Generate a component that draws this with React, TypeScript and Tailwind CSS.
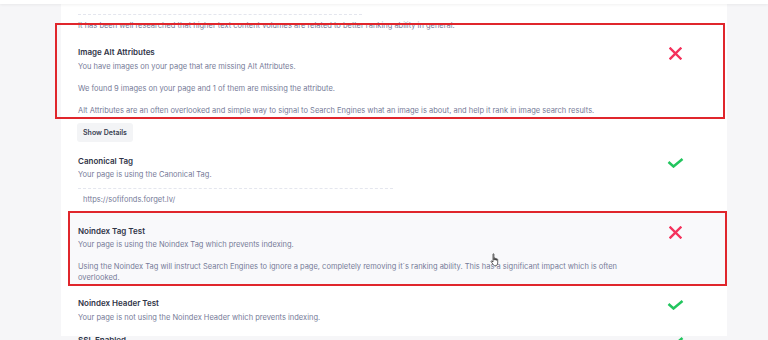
import React from 'react';

const body = 'text-[7.5px] leading-[11px] text-[#767b98]';
const title = 'text-[8px] leading-[14px] font-semibold text-[#2f3447]';

function Cross() {
  return (
    <svg width="13" height="13" viewBox="0 0 13 13" className="mt-[2px]">
      <path d="M1.5 1.5 L11.5 11.5 M11.5 1.5 L1.5 11.5" stroke="#f4325c" strokeWidth="2.4" strokeLinecap="square" />
    </svg>
  );
}

function Check() {
  return (
    <svg width="17" height="10" viewBox="0 0 17 10" className="mt-[4px]">
      <path d="M1.5 4 L6.5 8.5 L15.5 1" stroke="#22c55e" strokeWidth="2.5" fill="none" />
    </svg>
  );
}

function Row({
  children,
  icon,
  className = '',
}: {
  children: React.ReactNode;
  icon: React.ReactNode;
  className?: string;
}) {
  return (
    <div className={`flex justify-between pl-[17px] pr-[43px] ${className}`}>
      <div className="w-[560px]">{children}</div>
      <div className="w-[17px] flex justify-center items-start">{icon}</div>
    </div>
  );
}

export default function App() {
  return (
    <div
      className="relative w-[768px] h-[340px] overflow-hidden bg-[#f6f6f8]"
      style={{ fontFamily: 'Inter, "Noto Sans", sans-serif' }}
    >
      {/* header edge */}
      <div className="absolute top-0 left-0 right-0 h-[4px] bg-white shadow-[0_1px_3px_rgba(0,0,0,0.06)] z-10" />

      <div className="ml-[61px] w-[666px] h-full bg-white">
        <div className="pl-[17px]">
          <p className={`${body} -mt-[4px] ml-[6px] text-[#9a9eb3]`}>Word Count: 380</p>
          <div className="mt-[7px] w-[284px] border-t border-dashed border-[#e4e6ee]" />
          <p className={`${body} mt-[5px]`}>
            It has been well researched that higher text content volumes are related to better ranking ability in general.
          </p>
        </div>

        <Row icon={<Cross />} className="mt-[14px]">
          <p className={title}>Image Alt Attributes</p>
          <p className={`${body} mt-[2px]`}>You have images on your page that are missing Alt Attributes.</p>
          <p className={`${body} mt-[11px]`}>We found 9 images on your page and 1 of them are missing the attribute.</p>
          <p className={`${body} mt-[11px]`}>
            Alt Attributes are an often overlooked and simple way to signal to Search Engines what an image is about, and help it rank in image search results.
          </p>
        </Row>

        <div className="flex pl-[16px] mt-[7px]">
          <button className="block h-[19px] w-[56px] rounded-[3px] bg-[#f3f4f6] text-[7px] leading-[19px] font-semibold text-[#3a3f52]">
            Show Details
          </button>
        </div>

        <Row icon={<Check />} className="mt-[12px]">
          <p className={title}>Canonical Tag</p>
          <p className={`${body} mt-[1px]`}>Your page is using the Canonical Tag.</p>
          <div className="mt-[8px] w-[315px] border-t border-dashed border-[#e4e6ee]" />
          <p className={`${body} mt-[5px] ml-[5px] text-[#6b7089]`}>https://sofifonds.forget.lv/</p>
        </Row>

        <div className="mt-[6px] ml-[7px] bg-[#f9f9fb]">
          <div className="flex justify-between pl-[10px] pr-[43px] pt-[13px] pb-[3px]">
            <div className="w-[560px]">
              <p className={title}>Noindex Tag Test</p>
              <p className={`${body} mt-[1px]`}>Your page is using the Noindex Tag which prevents indexing.</p>
              <p className={`${body} mt-[11px]`}>
                Using the Noindex Tag will instruct Search Engines to ignore a page, completely removing it´s ranking ability. This has a significant impact which is often overlooked.
              </p>
            </div>
            <div className="w-[17px] flex justify-center items-start">
              <Cross />
            </div>
          </div>
        </div>

        <Row icon={<Check />} className="mt-[10px]">
          <p className={title}>Noindex Header Test</p>
          <p className={`${body} mt-[2px]`}>Your page is not using the Noindex Header which prevents indexing.</p>
        </Row>

        <Row icon={<Check />} className="mt-[10px]">
          <p className={title}>SSL Enabled</p>
        </Row>
      </div>

      {/* annotation boxes */}
      <div className="absolute left-[55px] top-[23px] w-[670px] h-[96px] border-2 border-[#e0262c]" />
      <div className="absolute left-[68px] top-[211px] w-[659px] h-[75px] border-2 border-[#e0262c]" />

      {/* cursor */}
      <svg className="absolute left-[490px] top-[253px]" width="11" height="14" viewBox="0 0 11 14">
        <path
          d="M3 1.2c0-.6.9-.6.9 0V7h.4V5.2c0-.6.9-.6.9 0V7h.4V5.8c0-.6.9-.6.9 0V7.3h.3V6.5c0-.6.9-.6.9 0v3.4c0 1.6-1 3-2.6 3H5.3c-.9 0-1.5-.4-2-1.1L1.2 8.6c-.3-.5.3-1 .8-.6L3 9V1.2z"
          fill="white"
          stroke="#222"
          strokeWidth="0.7"
        />
      </svg>
    </div>
  );
}
